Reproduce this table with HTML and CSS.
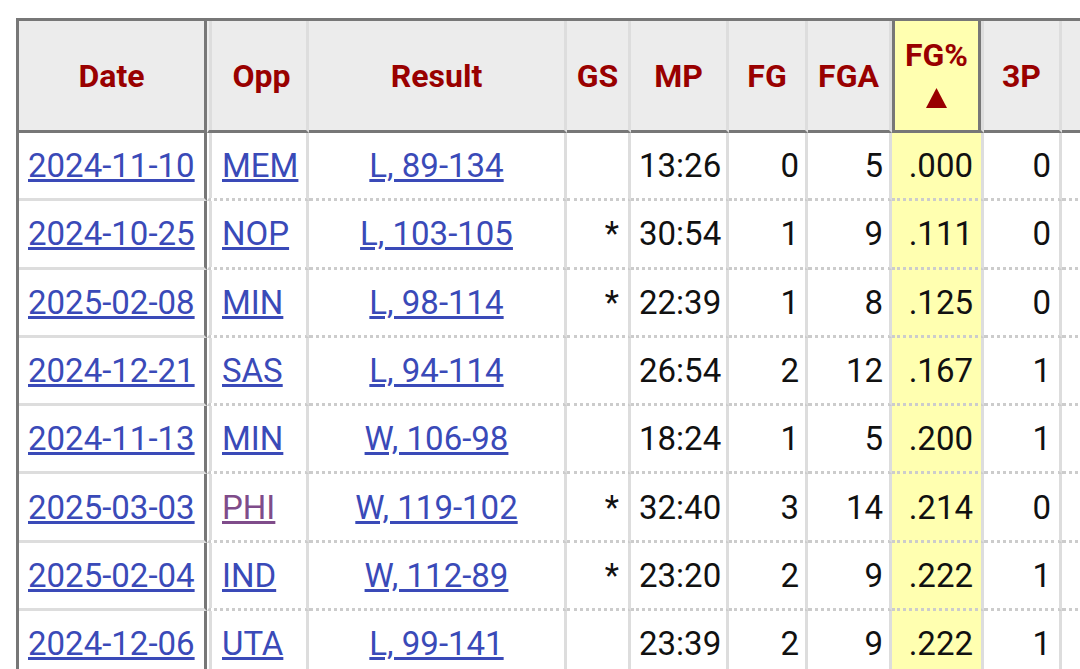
FILE: index.html
```html
<!DOCTYPE html>
<html lang="en">
<head>
<meta charset="utf-8">
<title>Game Log</title>
<link rel="stylesheet" href="styles.css">
</head>
<body>
<table class="stats">
  <thead>
    <tr>
      <th class="c-date">Date</th>
      <th class="c-opp">Opp</th>
      <th class="c-res">Result</th>
      <th class="c-gs">GS</th>
      <th class="c-mp">MP</th>
      <th class="c-fg">FG</th>
      <th class="c-fga">FGA</th>
      <th class="c-pct sorted">
        <div class="sort-label">FG%</div>
        <svg class="sort-arrow" width="21" height="20" viewBox="0 0 21 20" aria-hidden="true"><polygon points="10.5,0 21,20 0,20" fill="#990000"/></svg>
      </th>
      <th class="c-3p">3P</th>
      <th class="c-more"></th>
    </tr>
  </thead>
  <tbody>
    <tr><th class="c-date"><a href="#">2024-11-10</a></th><td class="c-opp"><a href="#">MEM</a></td><td class="c-res"><a href="#">L, 89-134</a></td><td class="c-gs"></td><td class="c-mp">13:26</td><td class="c-fg">0</td><td class="c-fga">5</td><td class="c-pct">.000</td><td class="c-3p">0</td><td class="c-more"></td></tr>
    <tr><th class="c-date"><a href="#">2024-10-25</a></th><td class="c-opp"><a href="#">NOP</a></td><td class="c-res"><a href="#">L, 103-105</a></td><td class="c-gs">*</td><td class="c-mp">30:54</td><td class="c-fg">1</td><td class="c-fga">9</td><td class="c-pct">.111</td><td class="c-3p">0</td><td class="c-more"></td></tr>
    <tr><th class="c-date"><a href="#">2025-02-08</a></th><td class="c-opp"><a href="#">MIN</a></td><td class="c-res"><a href="#">L, 98-114</a></td><td class="c-gs">*</td><td class="c-mp">22:39</td><td class="c-fg">1</td><td class="c-fga">8</td><td class="c-pct">.125</td><td class="c-3p">0</td><td class="c-more"></td></tr>
    <tr><th class="c-date"><a href="#">2024-12-21</a></th><td class="c-opp"><a href="#">SAS</a></td><td class="c-res"><a href="#">L, 94-114</a></td><td class="c-gs"></td><td class="c-mp">26:54</td><td class="c-fg">2</td><td class="c-fga">12</td><td class="c-pct">.167</td><td class="c-3p">1</td><td class="c-more"></td></tr>
    <tr><th class="c-date"><a href="#">2024-11-13</a></th><td class="c-opp"><a href="#">MIN</a></td><td class="c-res"><a href="#">W, 106-98</a></td><td class="c-gs"></td><td class="c-mp">18:24</td><td class="c-fg">1</td><td class="c-fga">5</td><td class="c-pct">.200</td><td class="c-3p">1</td><td class="c-more"></td></tr>
    <tr><th class="c-date"><a href="#">2025-03-03</a></th><td class="c-opp"><a href="#" class="visited">PHI</a></td><td class="c-res"><a href="#">W, 119-102</a></td><td class="c-gs">*</td><td class="c-mp">32:40</td><td class="c-fg">3</td><td class="c-fga">14</td><td class="c-pct">.214</td><td class="c-3p">0</td><td class="c-more"></td></tr>
    <tr><th class="c-date"><a href="#">2025-02-04</a></th><td class="c-opp"><a href="#">IND</a></td><td class="c-res"><a href="#">W, 112-89</a></td><td class="c-gs">*</td><td class="c-mp">23:20</td><td class="c-fg">2</td><td class="c-fga">9</td><td class="c-pct">.222</td><td class="c-3p">1</td><td class="c-more"></td></tr>
    <tr><th class="c-date"><a href="#">2024-12-06</a></th><td class="c-opp"><a href="#">UTA</a></td><td class="c-res"><a href="#">L, 99-141</a></td><td class="c-gs"></td><td class="c-mp">23:39</td><td class="c-fg">2</td><td class="c-fga">9</td><td class="c-pct">.222</td><td class="c-3p">1</td><td class="c-more"></td></tr>
  </tbody>
</table>
</body>
</html>
```
FILE: styles.css
```css
html, body {
  margin: 0;
  padding: 0;
  background: #ffffff;
  overflow: hidden;
}

body {
  font-family: Roboto, "Liberation Sans", sans-serif;
  color: #111111;
}

.stats {
  margin: 18px 0 0 16px;
  border-collapse: separate;
  border-spacing: 0;
  table-layout: fixed;
  width: 1076px;
  border-top: 3px solid #777777;
  border-left: 3px solid #777777;
}

.stats th,
.stats td {
  box-sizing: border-box;
  padding: 0 8px;
  border-right: 3px solid #dddddd;
  white-space: nowrap;
  vertical-align: middle;
}

/* header */
.stats thead th {
  height: 112px;
  background: #ececec;
  color: #990000;
  font-size: 32px;
  font-weight: 700;
  text-align: center;
  border-bottom: 3px solid #777777;
  padding: 0;
}

/* body rows */
.stats tbody td,
.stats tbody th {
  height: 68.3px;
  font-size: 33px;
  font-weight: 400;
  text-align: right;
  border-bottom: 3px dotted #cccccc;
}

.stats tbody th.c-date {
  border-bottom: 3px solid #dddddd;
}

/* column widths */
.c-date { width: 188px; }
.c-opp  { width: 102px; }
.c-res  { width: 258px; }
.c-gs   { width: 64px; }
.c-mp   { width: 98px; }
.c-fg   { width: 79px; }
.c-fga  { width: 84px; }
.c-pct  { width: 92px; }
.c-3p   { width: 78px; }
.c-more { width: 30px; }

.stats .c-date {
  border-right: 3px solid #777777;
}

.stats tbody .c-date {
  text-align: left;
  padding-left: 9px;
}

.stats .c-opp {
  border-left: 2px solid transparent;
  box-shadow: inset 3px 0 0 #dddddd;
}

.stats thead .c-opp {
  padding-left: 8px;
}

.stats tbody .c-opp {
  text-align: left;
  padding-left: 13px;
}

.stats tbody .c-res {
  text-align: center;
}

.stats tbody .c-gs { padding-right: 9px; }
.stats tbody .c-mp { padding-right: 6px; }
.stats tbody .c-fg { padding-right: 6px; }
.stats tbody .c-fga { padding-right: 6px; }
.stats tbody .c-pct { padding-right: 8px; }
.stats tbody .c-3p { padding-right: 8px; }

.stats .c-pct {
  background: #ffffb0;
}

.stats thead .sorted {
  background: #ffffb0;
  box-shadow: inset 3px 0 0 #777777, inset -3px 0 0 #777777;
}

.sort-label {
  line-height: 32px;
}

.sort-arrow {
  display: block;
  margin: 17px auto 4px;
}

a {
  color: #3a4ab8;
  text-decoration: underline;
  text-decoration-thickness: 2.5px;
}

a.visited {
  color: #7f4c8a;
}
```
